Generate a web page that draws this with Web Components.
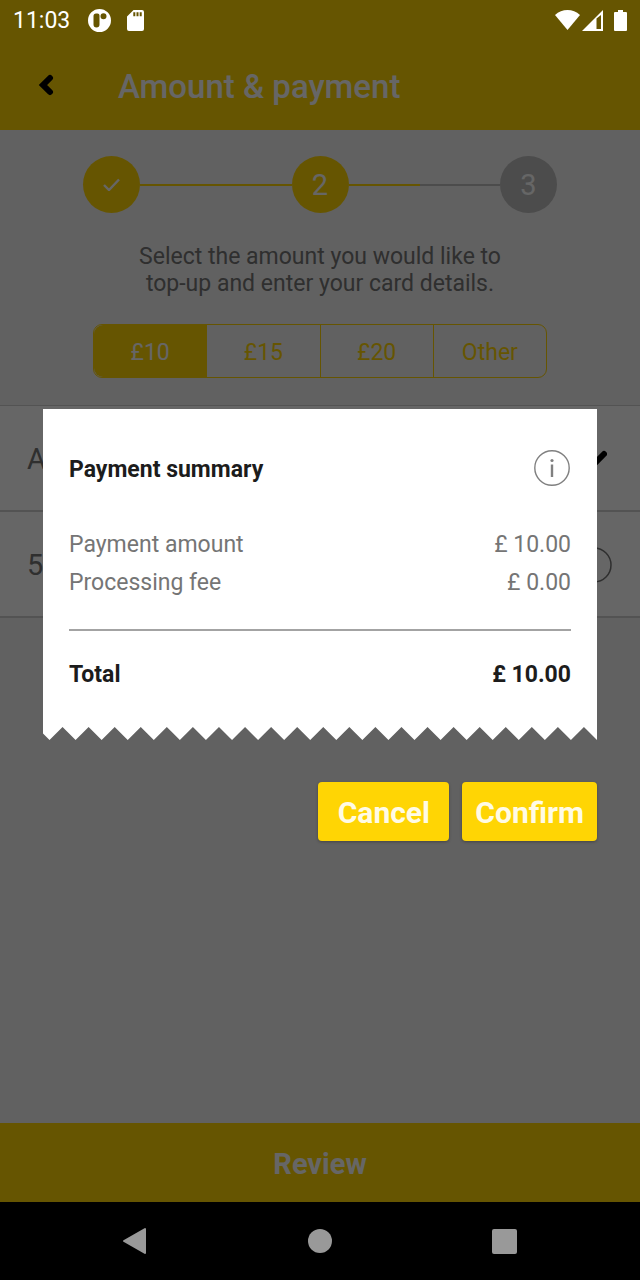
<!DOCTYPE html>
<html lang="en">
<head>
<meta charset="utf-8">
<meta name="viewport" content="width=device-width, initial-scale=1">
<title>Amount &amp; payment</title>
<style>
  :root { --brand: #ffd504; --surface: #f2f2f2; --scrim: rgba(0, 0, 0, 0.6); }
  body { margin: 0; font-family: Roboto, "Liberation Sans", sans-serif; }
</style>
</head>
<body>
<topup-screen>
  <status-bar slot="status" time="11:03"></status-bar>
  <app-toolbar slot="toolbar">Amount &amp; payment</app-toolbar>
  <step-progress current="2" total="3"></step-progress>
  <intro-text>Select the amount you would like to top-up and enter your card details.</intro-text>
  <amount-picker options="£10,£15,£20,Other"></amount-picker>
  <card-fields></card-fields>
  <review-button slot="action">Review</review-button>
  <payment-dialog slot="dialog">
    <summary-row label="Payment amount" value="£ 10.00"></summary-row>
    <summary-row label="Processing fee" value="£ 0.00"></summary-row>
    <summary-row slot="total" strong label="Total" value="£ 10.00"></summary-row>
  </payment-dialog>
  <system-nav slot="nav"></system-nav>
</topup-screen>

<script>
  const RESET = `
    :host, *, *::before, *::after { box-sizing: border-box; }
    button, input, select { font: inherit; color: inherit; background: none; border: 0; margin: 0; padding: 0; border-radius: 0; }
    svg { display: block; }
  `;

  function define(name, render) {
    customElements.define(name, class extends HTMLElement {
      constructor() {
        super();
        this.attachShadow({ mode: "open" });
      }
      connectedCallback() {
        const template = document.createElement("template");
        template.innerHTML = `<style>${RESET}</style>` + render(this);
        this.shadowRoot.replaceChildren(template.content.cloneNode(true));
      }
    });
  }

  define("topup-screen", () => `
    <style>
      :host { display: flex; flex-direction: column; min-height: 100vh; }
      .app { position: relative; flex: 1; display: flex; flex-direction: column; background: var(--surface); }
      .top { background: var(--brand); }
      main { flex: 1; }
      .overlay {
        position: absolute; inset: 0; background: var(--scrim);
        display: flex; flex-direction: column; justify-content: center;
        padding: 48px 43px 0;
      }
      .status { position: relative; z-index: 1; }
    </style>
    <div class="app">
      <div class="top">
        <div class="status"><slot name="status"></slot></div>
        <slot name="toolbar"></slot>
      </div>
      <main><slot></slot></main>
      <slot name="action"></slot>
      <div class="overlay"><slot name="dialog"></slot></div>
    </div>
    <slot name="nav"></slot>
  `);

  define("status-bar", el => `
    <style>
      :host { display: flex; align-items: center; height: 40px; padding: 0 13px; color: #fff; font-size: 23px; line-height: 28px; }
      .time { padding-top: 2px; }
      .notes { display: flex; align-items: center; gap: 16px; margin-left: 18px; flex: 1; }
      .system { display: flex; align-items: center; gap: 2px; }
      .battery { margin-left: 9px; }
    </style>
    <span class="time">${el.getAttribute("time")}</span>
    <div class="notes">
      <svg width="23" height="23" viewBox="0 0 23 23" aria-hidden="true">
        <path fill="#fff" fill-rule="evenodd" d="M11.500 0a11.500 11.500 0 1 0 0 23a11.500 11.500 0 1 0 0-23zM8 4.500h1.500a2 2 0 0 1 2 2v9a3 3 0 0 1-6 0V7a2.500 2.500 0 0 1 2.500-2.500zM15.500 4.300a3 3 0 1 1 0 6a3 3 0 1 1 0-6z"/>
      </svg>
      <svg width="17" height="21" viewBox="0 0 17 21" aria-hidden="true">
        <path fill="#fff" fill-rule="evenodd" d="M6.500 0H15a2 2 0 0 1 2 2v17a2 2 0 0 1-2 2H2a2 2 0 0 1-2-2V6.500zM6.300 2.300v4h2v-4zM9.500 2.300v4h2v-4zM12.700 2.300v4h2v-4z"/>
      </svg>
    </div>
    <div class="system">
      <svg width="25" height="21" viewBox="0 0 25 21" aria-hidden="true">
        <path fill="#fff" d="M0 5C7-1.600 18-1.600 25 5L12.500 20z"/>
      </svg>
      <svg width="21" height="21" viewBox="0 0 21 21" aria-hidden="true">
        <path fill="#fff" fill-rule="evenodd" d="M21 0v21H0zM14.500 8.500V19H19V5z"/>
      </svg>
      <svg class="battery" width="13" height="21" viewBox="0 0 13 21" aria-hidden="true">
        <path fill="#fff" d="M4 0h5v2h3a1 1 0 0 1 1 1v17a1 1 0 0 1-1 1H1a1 1 0 0 1-1-1V3a1 1 0 0 1 1-1h3z"/>
      </svg>
    </div>
  `);

  define("app-toolbar", () => `
    <style>
      :host { display: flex; align-items: center; height: 90px; padding: 0 26px; }
      button { width: 40px; height: 40px; display: grid; place-items: center; }
      h1 { margin: 0 0 0 52px; padding-top: 4px; color: #fff; font-size: 33px; line-height: 40px; font-weight: 500; }
    </style>
    <button type="button" aria-label="Back">
      <svg width="16" height="22" viewBox="0 0 16 22"><path d="M12 4L5 11l7 7" fill="none" stroke="#000" stroke-width="6" stroke-linecap="round"/></svg>
    </button>
    <h1><slot></slot></h1>
  `);

  define("step-progress", el => {
    const current = Number(el.getAttribute("current"));
    const total = Number(el.getAttribute("total"));
    const check = `<svg width="17" height="13" viewBox="0 0 17 13" role="img" aria-label="Done"><path d="M1 7l5 5L16 1.500" fill="none" stroke="#fff" stroke-width="2.400"/></svg>`;
    let items = "";
    for (let n = 1; n <= total; n++) {
      const state = n < current ? "done" : n === current ? "now" : "next";
      items += `<li class="${state}"><span>${n < current ? check : n}</span></li>`;
    }
    return `
    <style>
      :host { display: block; padding: 26px 83px 0; }
      ol { display: flex; margin: 0; padding: 0; list-style: none; }
      li { flex: 1; display: flex; align-items: center; }
      li:last-child { flex: none; }
      span { flex: none; width: 57px; height: 57px; border-radius: 50%; display: grid; place-items: center; background: var(--brand); color: #fff; font-size: 29px; line-height: 36px; }
      .next span { background: #bdbdbd; }
      li:not(:last-child)::after { content: ""; flex: 1; height: 2px; background: #bdbdbd; }
      li.done::after { background: var(--brand); }
      li.now:not(:last-child)::after { background: linear-gradient(90deg, var(--brand) 47%, #bdbdbd 47%); }
    </style>
    <ol>${items}</ol>`;
  });

  define("intro-text", () => `
    <style>
      :host { display: block; padding: 30px 128px 0; text-align: center; color: #757575; font-size: 23px; line-height: 27px; }
      p { margin: 0; }
    </style>
    <p><slot></slot></p>
  `);

  define("amount-picker", el => `
    <style>
      :host { display: block; padding: 27px 93px; }
      fieldset { margin: 0; padding: 0; min-width: 0; display: flex; height: 54px; border: 1px solid var(--brand); border-radius: 9px; overflow: hidden; }
      label { flex: 1; position: relative; display: grid; place-items: center; color: var(--brand); font-size: 23px; line-height: 28px; padding-top: 4px; }
      label + label { border-left: 1px solid var(--brand); }
      label:has(:checked) { background: var(--brand); color: #fff; }
      input { position: absolute; inset: 0; appearance: none; }
    </style>
    <fieldset aria-label="Amount">
      ${el.getAttribute("options").split(",").map((text, i) =>
        `<label><input type="radio" name="amount" ${i === 0 ? "checked" : ""}>${text}</label>`).join("")}
    </fieldset>
  `);

  define("card-fields", () => `
    <style>
      :host { display: block; border-top: 1px solid #d0d0d0; background: #fff; color: #757575; font-size: 29px; line-height: 36px; }
      label { display: flex; align-items: center; height: 106px; padding: 2px 28px 0 27px; border-bottom: 2px solid #d0d0d0; }
      select, input { flex: 1; min-width: 0; height: 40px; appearance: none; outline: 0; }
      .chevron { margin-right: 5px; }
    </style>
    <label>
      <select aria-label="Card"><option>A</option></select>
      <svg class="chevron" width="22" height="18" viewBox="0 0 22 18" aria-hidden="true"><path d="M3 4l8 8 8-8" fill="none" stroke="#000" stroke-width="6" stroke-linecap="round"/></svg>
    </label>
    <label>
      <input aria-label="Card number" value="5">
      <svg width="36" height="36" viewBox="0 0 36 36" aria-hidden="true"><circle cx="18" cy="18" r="17" fill="none" stroke="#757575" stroke-width="1.500"/></svg>
    </label>
  `);

  define("review-button", () => `
    <style>
      :host { display: block; }
      button { display: block; width: 100%; height: 79px; padding-top: 2px; background: var(--brand); color: #fff; font-size: 29px; line-height: 36px; font-weight: 700; }
    </style>
    <button type="button"><slot></slot></button>
  `);

  define("summary-row", el => `
    <style>
      :host { display: flex; justify-content: space-between; height: 38px; padding-top: 1px; color: #757575; font-size: 23px; line-height: 38px; }
      :host([strong]) { color: #1c1c1c; font-weight: 700; }
    </style>
    <span>${el.getAttribute("label")}</span><span>${el.getAttribute("value")}</span>
  `);

  // Torn receipt edge: a half tooth on the left, then full teeth to the right side.
  function tornEdge(teeth, width, height) {
    const pitch = width / (teeth + 0.25);
    let d = `M0 0V${height / 2}L${pitch / 4} ${height}`;
    for (let i = 0; i < teeth; i++) {
      const x = pitch / 4 + i * pitch;
      d += `L${x + pitch / 2} 0L${x + pitch} ${height}`;
    }
    return d + "V0z";
  }

  define("payment-dialog", () => `
    <style>
      :host { display: block; }
      .paper { background: #fff; padding: 41px 26px 34px; }
      header { display: flex; align-items: center; justify-content: space-between; height: 36px; margin-bottom: 39px; }
      h2 { margin: 0; padding-top: 4px; color: #1c1c1c; font-size: 23px; line-height: 36px; font-weight: 700; }
      .info { margin-right: 1px; }
      hr { margin: 28px 0 24px; border: 0; height: 2px; background: #a3a3a3; }
      .edge { width: 100%; height: 13px; }
      footer { display: flex; justify-content: flex-end; gap: 13px; margin-top: 42px; }
      footer button { min-width: 131px; height: 59px; padding: 2px 13px 0; border-radius: 4px; background: var(--brand); color: #fffbe6; font-size: 30px; line-height: 36px; font-weight: 700; box-shadow: 0 1px 3px rgba(0, 0, 0, 0.3); }
    </style>
    <section role="dialog" aria-labelledby="title">
      <div class="paper">
        <header>
          <h2 id="title">Payment summary</h2>
          <button class="info" type="button" aria-label="Fee information">
            <svg width="36" height="36" viewBox="0 0 36 36"><circle cx="18" cy="18" r="17.200" fill="none" stroke="#808080" stroke-width="1.400"/><circle cx="18" cy="10.500" r="1.600" fill="#808080"/><path d="M18 14.500v12.500" stroke="#808080" stroke-width="2.400"/></svg>
          </button>
        </header>
        <slot></slot>
        <hr>
        <slot name="total"></slot>
      </div>
      <svg class="edge" viewBox="0 0 554 13" preserveAspectRatio="none" aria-hidden="true"><path fill="#fff" d="${tornEdge(21, 554, 13)}"/></svg>
      <footer>
        <button type="button">Cancel</button>
        <button type="button">Confirm</button>
      </footer>
    </section>
  `);

  define("system-nav", () => `
    <style>
      :host { display: block; background: #000; }
      nav { display: grid; grid-template-columns: repeat(3, 1fr); height: 78px; padding: 0 43px; }
      button { display: grid; place-items: center; }
    </style>
    <nav aria-label="System">
      <button type="button" aria-label="Back"><svg width="26" height="28" viewBox="0 0 26 28"><path d="M23 2v24L2 14z" fill="#999" stroke="#999" stroke-width="2" stroke-linejoin="round"/></svg></button>
      <button type="button" aria-label="Home"><svg width="24" height="24" viewBox="0 0 24 24"><circle cx="12" cy="12" r="12" fill="#999"/></svg></button>
      <button type="button" aria-label="Overview"><svg width="25" height="25" viewBox="0 0 25 25"><rect width="25" height="25" rx="2" fill="#999"/></svg></button>
    </nav>
  `);
</script>
</body>
</html>
